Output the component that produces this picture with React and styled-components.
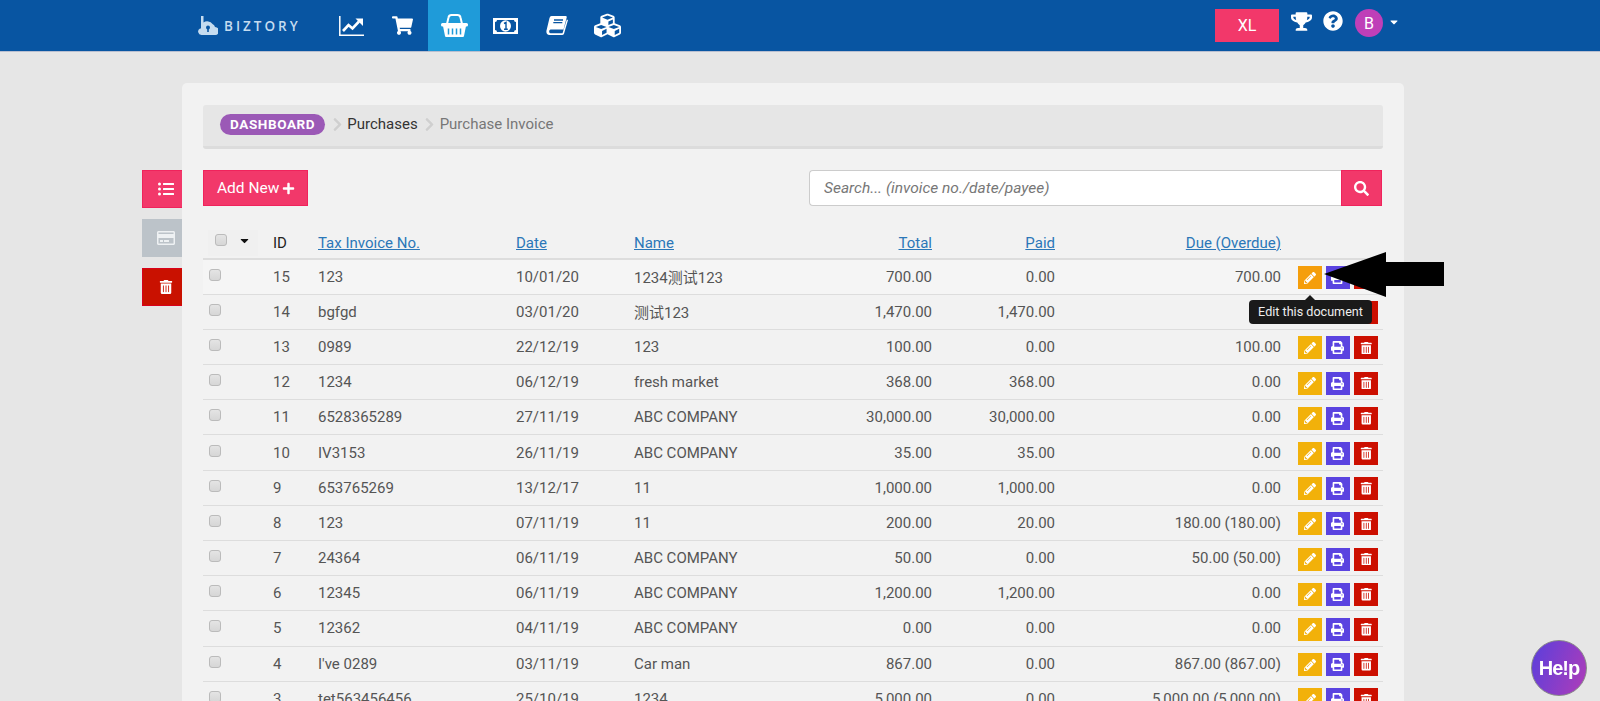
import React from 'react';
import styled, { createGlobalStyle } from 'styled-components';
import {
    FaShoppingCart,
    FaCubes,
    FaTrophy,
    FaQuestionCircle,
    FaListUl,
    FaRegCreditCard,
    FaTrashAlt,
    FaPlus,
    FaSearch,
    FaPencilAlt,
    FaPrint,
    FaCaretDown,
    FaChevronRight,
} from 'react-icons/fa';

const NAV_BLUE = '#0855a2';
const NAV_ACTIVE = '#1f9bd9';

const GlobalStyle = createGlobalStyle`
    html, body {
        margin: 0;
        height: 100%;
        overflow: hidden;
        background: #e6e6e6;
        font-family: Roboto, "Noto Sans CJK SC", sans-serif;
        color: #555;
    }
    * {
        box-sizing: border-box;
    }
`;

const Page = styled.div`
    position: relative;
    height: 701px;
    overflow: hidden;
`;

const Navbar = styled.header`
    display: flex;
    align-items: stretch;
    height: 52px;
    padding-left: 198px;
    background: ${NAV_BLUE};
    border-bottom: 1px solid #b9bfd0;
`;
const Brand = styled.div`
    display: flex;
    align-items: center;
    gap: 6px;
    width: 128px;
    color: #c5dcf0;
    font-family: "Open Sans", sans-serif;
    font-size: 13.5px;
    font-weight: 600;
    letter-spacing: 3px;
`;
const NavIcons = styled.nav`
    display: flex;
    align-items: stretch;
`;
const NavItem = styled.a`
    display: flex;
    align-items: center;
    justify-content: center;
    width: ${props => (props.$active ? 52 : 51)}px;
    color: white;
    background: ${props => (props.$active ? NAV_ACTIVE : 'transparent')};
`;
const NavRight = styled.div`
    display: flex;
    align-items: flex-start;
    margin-left: auto;
    padding-right: 200px;
    padding-top: 9px;
    color: white;
`;
const XlButton = styled.button`
    width: 64px;
    height: 33px;
    margin-right: 12px;
    border: 0;
    background: #f2386a;
    color: white;
    font-family: inherit;
    font-size: 16px;
`;
const TopIcon = styled.span`
    display: flex;
    font-size: ${props => props.$size}px;
    margin-right: ${props => props.$gap}px;
    margin-top: 2px;
`;
const Avatar = styled.span`
    display: flex;
    align-items: center;
    justify-content: center;
    width: 28px;
    height: 28px;
    margin-right: 5px;
    border-radius: 50%;
    background: #bf3fb8;
    font-size: 16px;
`;
const AvatarCaret = styled.span`
    display: flex;
    margin-top: 7px;
    font-size: 12px;
`;

const Main = styled.main`
    display: flex;
    padding: 31px 196px 0 142px;
`;
const SideActions = styled.aside`
    display: flex;
    flex-direction: column;
    gap: 11px;
    width: 40px;
    padding-top: 87px;
`;
const SideButton = styled.button`
    display: flex;
    align-items: center;
    justify-content: center;
    width: 40px;
    height: 38px;
    padding: 0 0 0 6px;
    border: 1px solid ${props => props.$border};
    border-right: 0;
    background: ${props => props.$bg};
    color: ${props => props.$color || 'white'};
    font-size: ${props => props.$size || 16}px;
`;

const Card = styled.section`
    flex: 1;
    min-height: 700px;
    padding: 22px 21px;
    background: #f2f2f2;
    border-radius: 5px 5px 0 0;
`;
const Breadcrumb = styled.div`
    display: flex;
    align-items: center;
    height: 44px;
    padding-left: 17px;
    padding-bottom: 3px;
    background: #e6e6e6;
    border-bottom: 3px solid #dcdcdc;
    border-radius: 3px;
    font-size: 15px;
`;
const DashboardPill = styled.span`
    padding: 2px 10px;
    height: 21px;
    border-radius: 11px;
    background: #9b59b6;
    color: white;
    font-size: 13.5px;
    font-weight: 700;
    letter-spacing: 0.6px;
`;
const CrumbSeparator = styled.span`
    display: flex;
    margin: 0 2.5px 0 4.5px;
    color: #cfcfcf;
    font-size: 15px;
`;
const Crumb = styled.span`
    color: ${props => (props.$current ? '#777' : '#333')};
`;

const Toolbar = styled.div`
    display: flex;
    justify-content: space-between;
    margin-top: 21px;
    padding-right: 1px;
`;
const AddButton = styled.button`
    display: flex;
    align-items: center;
    gap: 3px;
    height: 36px;
    padding: 0 12px 0 13px;
    border: 1px solid #f0235c;
    background: #f2386a;
    color: white;
    font-family: inherit;
    font-size: 15.5px;
`;
const SearchBox = styled.div`
    display: flex;
    width: 573px;
    height: 36px;
`;
const SearchInput = styled.input`
    flex: 1;
    min-width: 0;
    padding: 0 14px;
    border: 1px solid #ccc;
    border-right: 0;
    border-radius: 4px 0 0 4px;
    background: white;
    font-family: inherit;
    font-size: 15.5px;
    font-style: italic;
    &::placeholder {
        color: #777;
    }
`;
const SearchButton = styled.button`
    display: flex;
    align-items: center;
    justify-content: center;
    width: 41px;
    border: 1px solid #f0235c;
    background: #f2386a;
    color: white;
    font-size: 15px;
`;

const Table = styled.table`
    width: 100%;
    margin-top: 19px;
    border-collapse: collapse;
    table-layout: fixed;
    font-size: 15px;
`;
const Th = styled.th`
    height: 34px;
    padding: 4px 0 2px;
    border-bottom: 2px solid #ddd;
    font-weight: 400;
    text-align: ${props => (props.$right ? 'right' : 'left')};
    color: #222;
`;
const SortLink = styled.a`
    color: #2b77b8;
    text-decoration: underline;
`;
const Tr = styled.tr`
    background: ${props => (props.$hover ? '#f5f5f5' : 'transparent')};
`;
const Td = styled.td`
    position: relative;
    height: 35.2px;
    padding: 0;
    border-bottom: 1px solid #ddd;
    text-align: ${props => (props.$right ? 'right' : 'left')};
`;
const SelectAll = styled.div`
    display: flex;
    align-items: flex-start;
    gap: 11px;
    width: 50px;
    height: 26px;
    margin-left: 5px;
    padding: 4px 0 0 7px;
    background: #f0f0f0;
    color: #111;
    font-size: 13px;
`;
const Checkbox = styled.span`
    display: block;
    width: 12px;
    height: 12px;
    border: 1px solid #bbb;
    border-radius: 3px;
    background: linear-gradient(#e4e4e4, #d6d6d6);
`;
const RowCheckbox = styled(Checkbox)`
    margin: 0 0 4px 6px;
`;
const Actions = styled.div`
    display: flex;
    gap: 4.5px;
    margin-top: 2px;
    padding-left: 17px;
`;
const ActionButton = styled.button`
    display: flex;
    align-items: center;
    justify-content: center;
    width: 23.5px;
    height: 23px;
    padding: 0;
    border: 0;
    background: ${props => props.$bg};
    color: white;
    font-size: ${props => props.$size || 12}px;
`;
const Tooltip = styled.div`
    position: absolute;
    top: 40px;
    left: -32px;
    width: 123px;
    height: 24px;
    border-radius: 4px;
    background: #1a1a1a;
    color: #eee;
    font-size: 12.6px;
    line-height: 24px;
    text-align: center;
    z-index: 2;
    &::before {
        content: '';
        position: absolute;
        top: -5px;
        left: 56px;
        border-left: 5px solid transparent;
        border-right: 5px solid transparent;
        border-bottom: 5px solid #1a1a1a;
    }
`;
const Arrow = styled.svg`
    position: absolute;
    top: 252px;
    left: 1324px;
    z-index: 3;
`;
const HelpBubble = styled.div`
    position: fixed;
    right: 13px;
    bottom: 5px;
    display: flex;
    align-items: center;
    justify-content: center;
    width: 56px;
    height: 56px;
    border: 1px solid #888;
    border-radius: 50%;
    background: linear-gradient(110deg, #5a3fdc, #b03cb8);
    color: white;
    font-family: "Liberation Sans", sans-serif;
    font-size: 20px;
    font-weight: 700;
    letter-spacing: -1px;
`;

const COLUMNS = [70, 45, 198, 118, 166, 132, 123, 226, 102];

const ROWS = [
    ['15', '123', '10/01/20', '1234测试123', '700.00', '0.00', '700.00'],
    ['14', 'bgfgd', '03/01/20', '测试123', '1,470.00', '1,470.00', '0.00'],
    ['13', '0989', '22/12/19', '123', '100.00', '0.00', '100.00'],
    ['12', '1234', '06/12/19', 'fresh market', '368.00', '368.00', '0.00'],
    ['11', '6528365289', '27/11/19', 'ABC COMPANY', '30,000.00', '30,000.00', '0.00'],
    ['10', 'IV3153', '26/11/19', 'ABC COMPANY', '35.00', '35.00', '0.00'],
    ['9', '653765269', '13/12/17', '11', '1,000.00', '1,000.00', '0.00'],
    ['8', '123', '07/11/19', '11', '200.00', '20.00', '180.00 (180.00)'],
    ['7', '24364', '06/11/19', 'ABC COMPANY', '50.00', '0.00', '50.00 (50.00)'],
    ['6', '12345', '06/11/19', 'ABC COMPANY', '1,200.00', '1,200.00', '0.00'],
    ['5', '12362', '04/11/19', 'ABC COMPANY', '0.00', '0.00', '0.00'],
    ['4', "I've 0289", '03/11/19', 'Car man', '867.00', '0.00', '867.00 (867.00)'],
    ['3', 'tet563456456', '25/10/19', '1234', '5,000.00', '0.00', '5,000.00 (5,000.00)'],
];

const Logo = () => (
    <svg width="20" height="19" viewBox="0 0 20 19">
        <path d="M3 0h2.500v6.500a6.500 6.500 0 0 1 9 1.500 4 4 0 0 1 2.500 3 4 4 0 0 1-.5 8H3.500a3.500 3.500 0 0 1-1.500-6.600H3z" fill="#c5dcf0" />
        <circle cx="10" cy="11.500" r="2" fill={NAV_BLUE} />
        <rect x="9.200" y="12" width="1.600" height="4" fill={NAV_BLUE} />
    </svg>
);

const ChartIcon = () => (
    <svg width="25" height="20" viewBox="0 0 25 20">
        <path d="M.8 0v19.200H25" fill="none" stroke="white" strokeWidth="1.500" />
        <path d="M4 15 9.500 9l4 3.500L20 5.500" fill="none" stroke="white" strokeWidth="2.600" />
        <path d="M16.500 2.500H24V10z" fill="white" />
    </svg>
);

const BasketIcon = () => (
    <svg width="27" height="23" viewBox="0 0 27 23">
        <path d="M6 10 7.500 3.500Q8 1 10.500 1h6Q19 1 19.500 3.500L21 10" fill="none" stroke="white" strokeWidth="2" />
        <rect y="9" width="27" height="3.500" rx="1.500" fill="white" />
        <path d="M2 12h23l-2 10q-.2 1-1 1H5q-.8 0-1-1z" fill="white" />
        <path d="M7.500 14.500v6M11.500 14.500v6M15.500 14.500v6M19.500 14.500v6" stroke={NAV_ACTIVE} strokeWidth="1.500" />
    </svg>
);

const MoneyIcon = () => (
    <svg width="25" height="16" viewBox="0 0 25 16">
        <rect width="25" height="16" fill="white" />
        <path d="M4 2h17a2 2 0 0 0 2 2v8a2 2 0 0 0-2 2H4a2 2 0 0 0-2-2V4a2 2 0 0 0 2-2z" fill={NAV_BLUE} />
        <ellipse cx="12.500" cy="8" rx="5.500" ry="5.800" fill="white" />
        <path d="M11 5.500 13 4.500V11M11 11.200h3.800" fill="none" stroke={NAV_BLUE} strokeWidth="1.400" />
    </svg>
);

const BookIcon = () => (
    <svg width="22" height="19" viewBox="0 0 22 19">
        <path d="M5.500 0H19.500a1.200 1.200 0 0 1 1.200 1.500L17.500 13.500H4.500a2 2 0 0 0 0 3.800H16.500L20.800 3.500l1.200.5L18 17.800Q17.500 19 16 19H3.500C1 19 0 17 .5 14.500L3.500 2Q4 0 5.500 0Z" fill="white" />
        <path d="M8 4h9M7.300 6.700h9" stroke={NAV_BLUE} strokeWidth="1.300" />
    </svg>
);

const App = () => (
    <Page>
        <GlobalStyle />
        <Navbar>
            <Brand>
                <Logo />
                BIZTORY
            </Brand>
            <NavIcons>
                <NavItem><ChartIcon /></NavItem>
                <NavItem><FaShoppingCart size={21} /></NavItem>
                <NavItem $active><BasketIcon /></NavItem>
                <NavItem><MoneyIcon /></NavItem>
                <NavItem><BookIcon /></NavItem>
                <NavItem><FaCubes size={27} /></NavItem>
            </NavIcons>
            <NavRight>
                <XlButton>XL</XlButton>
                <TopIcon $size={21} $gap={11}><FaTrophy /></TopIcon>
                <TopIcon $size={20} $gap={12}><FaQuestionCircle /></TopIcon>
                <Avatar>B</Avatar>
                <AvatarCaret><FaCaretDown /></AvatarCaret>
            </NavRight>
        </Navbar>
        <Main>
            <SideActions>
                <SideButton $bg="#f2386a" $border="#f0235c"><FaListUl /></SideButton>
                <SideButton $bg="#bcc3c9" $border="#bcc3c9" $color="#eef1f3" $size={18}><FaRegCreditCard /></SideButton>
                <SideButton $bg="#c91100" $border="#d9001b" $size={14}><FaTrashAlt /></SideButton>
            </SideActions>
            <Card>
                <Breadcrumb>
                    <DashboardPill>DASHBOARD</DashboardPill>
                    <CrumbSeparator><FaChevronRight /></CrumbSeparator>
                    <Crumb>Purchases</Crumb>
                    <CrumbSeparator><FaChevronRight /></CrumbSeparator>
                    <Crumb $current>Purchase Invoice</Crumb>
                </Breadcrumb>
                <Toolbar>
                    <AddButton>Add New <FaPlus size={13} /></AddButton>
                    <SearchBox>
                        <SearchInput placeholder="Search... (invoice no./date/payee)" />
                        <SearchButton><FaSearch /></SearchButton>
                    </SearchBox>
                </Toolbar>
                <Table>
                    <colgroup>
                        {COLUMNS.map((width, i) => <col key={i} width={width} />)}
                    </colgroup>
                    <thead>
                        <tr>
                            <Th>
                                <SelectAll>
                                    <Checkbox />
                                    <FaCaretDown />
                                </SelectAll>
                            </Th>
                            <Th>ID</Th>
                            <Th><SortLink>Tax Invoice No.</SortLink></Th>
                            <Th><SortLink>Date</SortLink></Th>
                            <Th><SortLink>Name</SortLink></Th>
                            <Th $right><SortLink>Total</SortLink></Th>
                            <Th $right><SortLink>Paid</SortLink></Th>
                            <Th $right><SortLink>Due (Overdue)</SortLink></Th>
                            <Th />
                        </tr>
                    </thead>
                    <tbody>
                        {ROWS.map((row, index) => (
                            <Tr key={row[0]} $hover={index === 0}>
                                <Td><RowCheckbox /></Td>
                                <Td>{row[0]}</Td>
                                <Td>{row[1]}</Td>
                                <Td>{row[2]}</Td>
                                <Td>{row[3]}</Td>
                                <Td $right>{row[4]}</Td>
                                <Td $right>{row[5]}</Td>
                                <Td $right>{row[6]}</Td>
                                <Td>
                                    <Actions>
                                        <ActionButton $bg={index === 0 ? '#f59e0b' : '#f2b10a'}><FaPencilAlt /></ActionButton>
                                        <ActionButton $bg="#5a43e0" $size={13}><FaPrint /></ActionButton>
                                        <ActionButton $bg="#cc0f00" $size={12.5}><FaTrashAlt /></ActionButton>
                                    </Actions>
                                    {index === 0 && <Tooltip>Edit this document</Tooltip>}
                                </Td>
                            </Tr>
                        ))}
                    </tbody>
                </Table>
            </Card>
        </Main>
        <Arrow width="121" height="46" viewBox="0 0 121 46">
            <path d="M0 22 62 0V10H120V34H62V45Z" fill="#000" />
        </Arrow>
        <HelpBubble>He!p</HelpBubble>
    </Page>
);

export default App;
